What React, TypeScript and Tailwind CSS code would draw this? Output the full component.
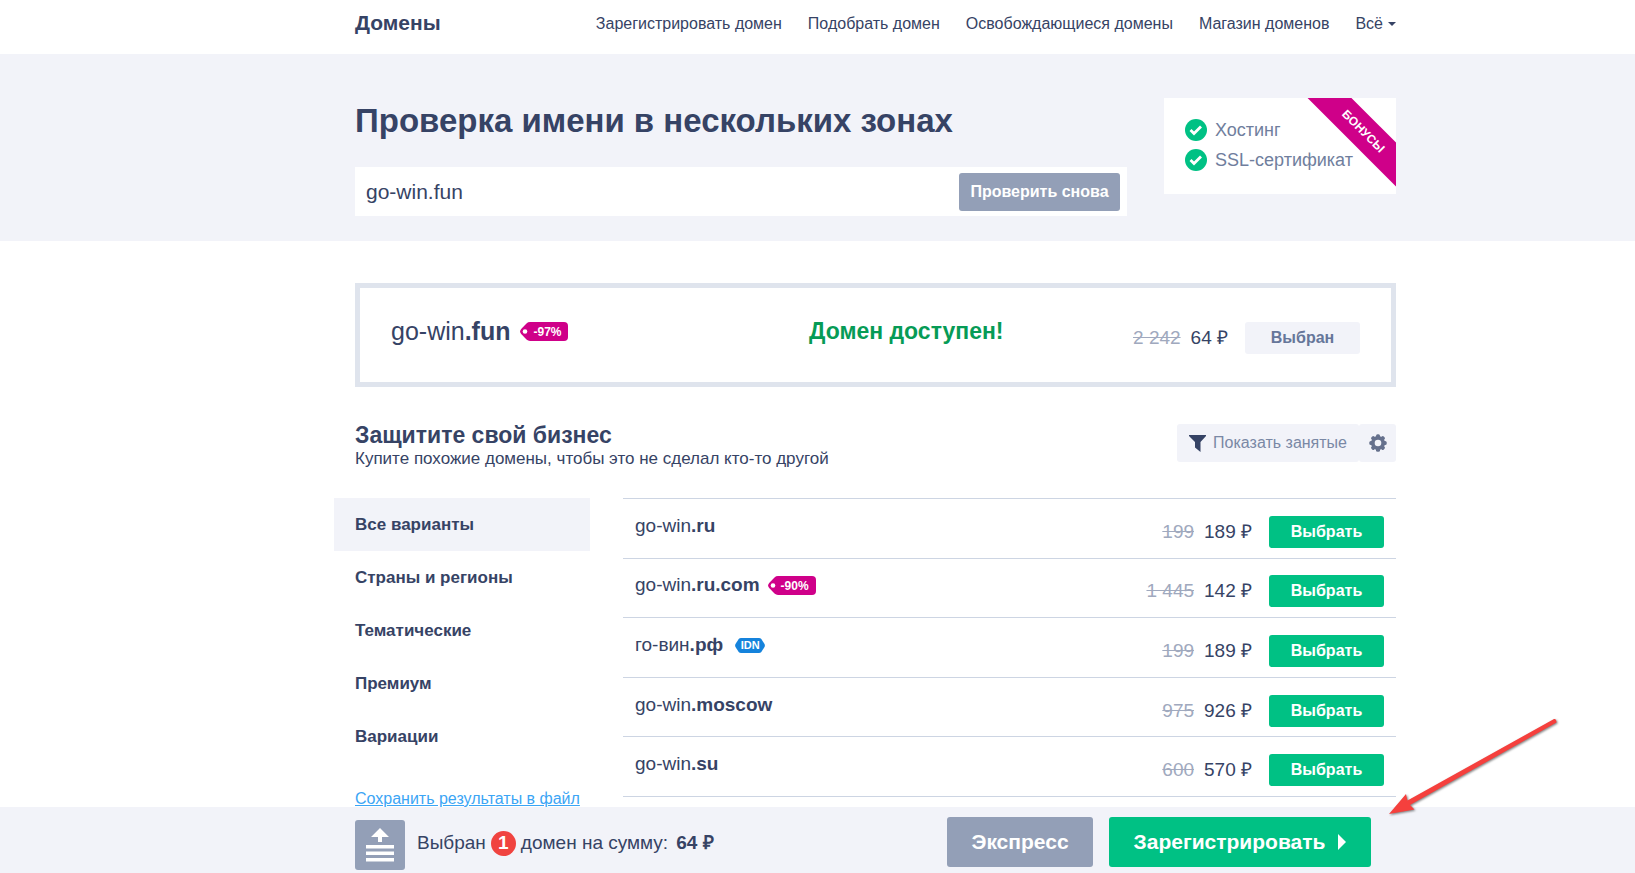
import { useState } from 'react'
import type { ReactNode } from 'react'
import clsx from 'clsx'

const NAV_LINKS = [
  'Зарегистрировать домен',
  'Подобрать домен',
  'Освобождающиеся домены',
  'Магазин доменов',
]

const CATEGORIES = ['Все варианты', 'Страны и регионы', 'Тематические', 'Премиум', 'Вариации']

type Domain = {
  name: string
  zone: string
  oldPrice: string
  price: string
  discount?: string
  idn?: boolean
}

const DOMAINS: Domain[] = [
  { name: 'go-win', zone: '.ru', oldPrice: '199', price: '189' },
  { name: 'go-win', zone: '.ru.com', oldPrice: '1 445', price: '142', discount: '-90%' },
  { name: 'го-вин', zone: '.рф', oldPrice: '199', price: '189', idn: true },
  { name: 'go-win', zone: '.moscow', oldPrice: '975', price: '926' },
  { name: 'go-win', zone: '.su', oldPrice: '600', price: '570' },
]

function Container({ children, className }: { children: ReactNode; className?: string }) {
  return (
    <div className="pl-[116px]">
      <div className={clsx('mx-auto max-w-[1041px]', className)}>{children}</div>
    </div>
  )
}

function DiscountTag({ children }: { children: ReactNode }) {
  return (
    <span className="relative inline-flex h-[19px] w-12 items-center justify-end pr-[7px] text-xs font-bold text-white">
      <svg className="absolute inset-0" width="48" height="19" viewBox="0 0 48 19" aria-hidden="true">
        <path
          d="M10 0H44a4 4 0 0 1 4 4V15a4 4 0 0 1-4 4H10Q8 19 6.500 17.600L1.200 12Q-1 9.500 1.200 7L6.500 1.400Q8 0 10 0Z"
          fill="#cf0089"
        />
        <circle cx="5" cy="9.500" r="2.300" fill="#fff" />
      </svg>
      <span className="relative">{children}</span>
    </span>
  )
}

function IdnTag() {
  return (
    <span className="relative ml-1 inline-flex h-[15px] w-[30px] items-center justify-center text-[11px] font-bold text-white">
      <svg className="absolute inset-0" width="30" height="15" viewBox="0 0 30 15" aria-hidden="true">
        <path
          d="M6 0H24Q25.500 0 26.300 1L29.500 6Q30.300 7.500 29.500 9L26.300 14Q25.500 15 24 15H6Q4.500 15 3.700 14L.5 9Q-.3 7.500.5 6L3.700 1Q4.500 0 6 0Z"
          fill="#1583dc"
        />
      </svg>
      <span className="relative">IDN</span>
    </span>
  )
}

function CheckIcon() {
  return (
    <svg width="22" height="22" viewBox="0 0 22 22" aria-hidden="true">
      <circle cx="11" cy="11" r="11" fill="#00c184" />
      <path d="M5.500 11L9 14.500L16 7.500" fill="none" stroke="#fff" strokeWidth="2.800" />
    </svg>
  )
}

function GearIcon() {
  return (
    <svg width="18" height="18" viewBox="0 0 18 18" fill="#66718d" aria-hidden="true">
      {[0, 45, 90, 135].map((angle) => (
        <rect key={angle} x="7" y="0.300" width="4" height="17.400" rx="1.500" transform={`rotate(${angle} 9 9)`} />
      ))}
      <circle cx="9" cy="9" r="7" />
      <circle cx="9" cy="9" r="3.300" fill="#f2f3f9" />
    </svg>
  )
}

function Price({ oldPrice, price }: { oldPrice: string; price: string }) {
  return (
    <span className="flex justify-end gap-[10px] text-[19px] leading-6 whitespace-nowrap">
      <s className="text-[#a0a9be]">{oldPrice}</s>
      <span>{price} ₽</span>
    </span>
  )
}

function Header() {
  return (
    <header>
      <Container className="flex h-[54px] items-start justify-between pt-[11px]">
        <a href="#" className="text-[21px] leading-6 font-bold">
          Домены
        </a>
        <nav className="flex gap-[26px] text-base leading-[26px]">
          {NAV_LINKS.map((link) => (
            <a key={link} href="#">
              {link}
            </a>
          ))}
          <button type="button" className="flex items-center gap-[5px]">
            Всё
            <svg width="8" height="4" viewBox="0 0 8 4" fill="currentColor" aria-hidden="true">
              <path d="M0 0H8L4 4Z" />
            </svg>
          </button>
        </nav>
      </Container>
    </header>
  )
}

function Search() {
  const [query, setQuery] = useState('go-win.fun')

  return (
    <section className="bg-[#f2f3f9]">
      <Container className="flex h-[187px] items-start gap-[37px] pt-11">
        <div className="min-w-0 flex-1">
          <h1 className="text-[33px] leading-[46px] font-bold">Проверка имени в нескольких зонах</h1>
          <form className="mt-[23px] flex h-[49px] items-center bg-white pr-[7px]" onSubmit={(e) => e.preventDefault()}>
            <input
              aria-label="Имя домена"
              value={query}
              onChange={(e) => setQuery(e.target.value)}
              className="h-full min-w-0 flex-1 px-[11px] text-[21px] outline-none"
            />
            <button type="submit" className="h-[38px] w-[161px] rounded-[3px] bg-[#939fb7] text-base font-bold text-white">
              Проверить снова
            </button>
          </form>
        </div>
        <div className="relative h-24 w-[232px] overflow-hidden bg-white pt-[21px] pl-[21px] text-lg text-[#6f7e9d]">
          <ul className="flex flex-col gap-2">
            <li className="flex items-center gap-2 leading-[22px]">
              <CheckIcon />
              Хостинг
            </li>
            <li className="flex items-center gap-2 leading-[22px]">
              <CheckIcon />
              SSL-сертификат
            </li>
          </ul>
          <div className="absolute top-[18px] -right-[37px] h-[31px] w-[140px] rotate-45 bg-[#cf0089] text-center text-xs leading-[31px] font-bold text-white">
            БОНУСЫ
          </div>
        </div>
      </Container>
    </section>
  )
}

function SelectedDomain() {
  return (
    <section className="mt-[42px] flex h-[104px] items-start border-[5px] border-[#dfe4ed] pt-[34px] pr-[31px] pl-[31px]">
      <div className="flex w-[418px] items-center gap-[10px] text-[25px] leading-[19px]">
        <span>
          go-win<b>.fun</b>
        </span>
        <DiscountTag>-97%</DiscountTag>
      </div>
      <div className="text-[23px] leading-[19px] font-bold text-[#069b56]">Домен доступен!</div>
      <div className="ml-auto flex items-center gap-[17px]">
        <Price oldPrice="2 242" price="64" />
        <button type="button" className="h-8 w-[115px] rounded-[3px] bg-[#f2f3f9] text-base font-bold text-[#66769a]">
          Выбран
        </button>
      </div>
    </section>
  )
}

function SectionHeading() {
  return (
    <div className="mt-[37px] flex h-[74px] items-start justify-between">
      <div>
        <h2 className="text-[23px] leading-[22px] font-bold">Защитите свой бизнес</h2>
        <p className="text-[17px] leading-[26px]">Купите похожие домены, чтобы это не сделал кто-то другой</p>
      </div>
      <div className="flex h-[38px] text-[#7a88a5]">
        <button type="button" className="flex items-center gap-[7px] rounded-[3px] bg-[#f2f3f9] pr-3 pl-3 text-base">
          <svg width="17" height="17" viewBox="0 0 17 17" fill="#364365" aria-hidden="true">
            <path d="M0 0H17V1L11.500 7V17L6 12.500V7L0 1Z" />
          </svg>
          Показать занятые
        </button>
        <button type="button" aria-label="Настройки" className="flex w-[37px] items-center justify-center rounded-[3px] bg-[#f2f3f9]">
          <GearIcon />
        </button>
      </div>
    </div>
  )
}

function Sidebar() {
  const [active, setActive] = useState(CATEGORIES[0])

  return (
    <aside className="-ml-[21px] w-64 shrink-0">
      {CATEGORIES.map((category) => (
        <button
          key={category}
          type="button"
          onClick={() => setActive(category)}
          className={clsx(
            'block h-[53px] w-full px-[21px] pt-px text-left text-[17px] font-bold',
            category === active && 'bg-[#f2f3f9]',
          )}
        >
          {category}
        </button>
      ))}
      <a href="#" className="mt-6 ml-[21px] inline-block text-base leading-6 text-[#3ba5f5] underline">
        Сохранить результаты в файл
      </a>
    </aside>
  )
}

function DomainTable() {
  return (
    <table className="h-[299px] flex-1 border-collapse border-y border-[#cdd5e3]">
      <tbody>
        {DOMAINS.map((domain) => (
          <tr key={domain.name + domain.zone} className="border-b border-[#cdd5e3]">
            <td className="pl-3 align-top">
              <div className="flex h-[54px] items-center gap-2 text-[19px]">
                <span>
                  {domain.name}
                  <b>{domain.zone}</b>
                </span>
                {domain.discount && <DiscountTag>{domain.discount}</DiscountTag>}
                {domain.idn && <IdnTag />}
              </div>
            </td>
            <td className="pt-[7px]">
              <Price oldPrice={domain.oldPrice} price={domain.price} />
            </td>
            <td className="w-36 pt-[7px] pr-3 text-right">
              <button type="button" className="h-8 w-[115px] rounded-[3px] bg-[#00c184] text-base font-bold text-white">
                Выбрать
              </button>
            </td>
          </tr>
        ))}
      </tbody>
    </table>
  )
}

function BottomBar() {
  return (
    <div className="fixed inset-x-0 bottom-0 bg-[#f2f3f9]">
      <Container className="flex h-[66px] items-start pt-[10px] pr-[25px]">
        <button
          type="button"
          aria-label="Наверх"
          className="mt-[3px] flex h-[50px] w-[50px] items-center justify-center rounded-[3px] bg-[#939fb7]"
        >
          <svg width="28" height="34" viewBox="0 0 28 34" fill="#fff" aria-hidden="true">
            <path d="M14 0L23 9H16V14H12V9H5ZM0 17H28V20.500H0ZM0 23.500H28V27H0ZM0 30H28V33.500H0Z" />
          </svg>
        </button>
        <div className="ml-3 flex h-[52px] items-center text-[19px]">
          Выбран
          <span className="mx-[5px] flex h-[25px] w-[25px] items-center justify-center rounded-full bg-[#f04340] font-bold text-white">
            1
          </span>
          домен на сумму:
          <b className="ml-2">64 ₽</b>
        </div>
        <div className="ml-auto flex gap-4 text-[21px] font-bold text-white">
          <button type="button" className="h-[50px] w-[146px] rounded-[3px] bg-[#939fb7]">
            Экспресс
          </button>
          <button type="button" className="flex h-[50px] w-[262px] items-center justify-center gap-[13px] rounded-[3px] bg-[#00c184]">
            Зарегистрировать
            <svg width="8" height="16" viewBox="0 0 8 16" fill="currentColor" aria-hidden="true">
              <path d="M0 0L8 8L0 16Z" />
            </svg>
          </button>
        </div>
      </Container>
    </div>
  )
}

// Red pointer drawn over the page, aimed at the register button
function Pointer() {
  return (
    <svg
      className="pointer-events-none fixed right-[74px] bottom-[56px] drop-shadow-[1px_1px_1px_rgba(0,0,0,0.5)]"
      width="172"
      height="100"
      viewBox="0 0 172 100"
      fill="#f5403d"
      aria-hidden="true"
    >
      <path d="M0 97L17 77L18.500 83.500L165 2Q167.500 1.500 167.500 5.500L21 88L25.500 92.500Z" />
    </svg>
  )
}

export default function App() {
  return (
    <div className="font-['Liberation_Sans',Arial,sans-serif] text-[#364365]">
      <Header />
      <Search />
      <main>
        <Container>
          <SelectedDomain />
          <SectionHeading />
          <div className="flex items-start gap-[33px]">
            <Sidebar />
            <DomainTable />
          </div>
        </Container>
      </main>
      <BottomBar />
      <Pointer />
    </div>
  )
}
